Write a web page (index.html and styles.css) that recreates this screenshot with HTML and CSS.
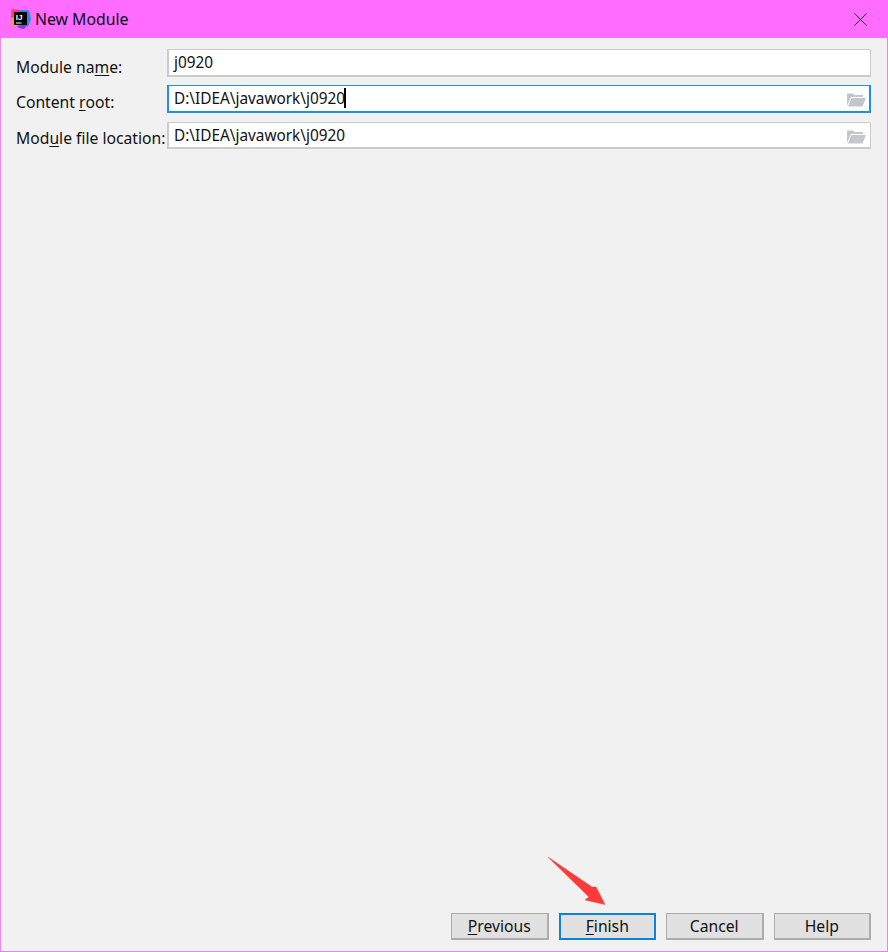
FILE: index.html
```html
<!DOCTYPE html>
<html lang="en">
<head>
<meta charset="utf-8">
<title>New Module</title>
<link rel="stylesheet" href="styles.css">
</head>
<body>
<div class="window">
  <header class="titlebar">
    <svg class="app-icon" width="20" height="21" viewBox="0 0 20 21">
      <path d="M0.500 0 L10 1 L10 10 L0 11 Z" fill="#fc3a7b"/>
      <path d="M0 9 L4 8 L5 18 L1.500 17 Z" fill="#fd9a2c"/>
      <path d="M9 1 L18 1.500 L20 10 L17.500 17 L8 19 Z" fill="#1f8df0"/>
      <path d="M6 17 L17 15 L13 20 L8 19 Z" fill="#7a3de8"/>
      <rect x="3" y="3" width="13" height="13" fill="#000"/>
      <text x="4.800" y="10.800" class="icon-text">IJ</text>
      <rect x="5" y="13.500" width="5.500" height="1" fill="#fff"/>
    </svg>
    <span class="title">New Module</span>
    <svg class="close" width="13" height="13" viewBox="0 0 13 13">
      <path d="M0.500 0.500 L12.500 12.500 M12.500 0.500 L0.500 12.500" stroke="#111" stroke-width="1" fill="none"/>
    </svg>
  </header>
  <main class="content">
    <div class="form">
      <label class="label label-first">Module na<u>m</u>e:</label>
      <div class="field"><span class="value">j0920</span></div>
      <label class="label">Content <u>r</u>oot:</label>
      <div class="field field-focus">
        <span class="value">D:\IDEA\javawork\j0920</span><span class="caret"></span>
        <svg class="folder" width="20" height="15" viewBox="0 0 20 15"><path d="M1 14 L1 1.500 L7 1.500 L8.500 3 L17 3 L17 5 L5 5 Z" fill="#c2c8ca"/><path d="M2 14.500 L5.500 6 L20 6 L16.500 14.500 Z" fill="#c2c8ca"/></svg>
      </div>
      <label class="label">Mod<u>u</u>le file location:</label>
      <div class="field field-last">
        <span class="value">D:\IDEA\javawork\j0920</span>
        <svg class="folder" width="20" height="15" viewBox="0 0 20 15"><path d="M1 14 L1 1.500 L7 1.500 L8.500 3 L17 3 L17 5 L5 5 Z" fill="#c2c8ca"/><path d="M2 14.500 L5.500 6 L20 6 L16.500 14.500 Z" fill="#c2c8ca"/></svg>
      </div>
    </div>
    <footer class="buttons">
      <button class="btn"><u>P</u>revious</button>
      <button class="btn btn-default"><u>F</u>inish</button>
      <button class="btn">Cancel</button>
      <button class="btn">Help</button>
    </footer>
  </main>
  <svg class="arrow" width="70" height="60" viewBox="0 0 70 60">
    <path d="M1 0 L45 30 L49 30 L58 47.500 L38 43 L42 40 Z" fill="#fd3a3a" stroke="#fd3a3a" stroke-width="0.500"/>
  </svg>
</div>
</body>
</html>
```

FILE: styles.css
```css
* { box-sizing: border-box; }
html, body { margin: 0; padding: 0; height: 100%; }
body { font-family: "Noto Sans", "Open Sans", sans-serif; font-size: 15.7px; color: #111; background: #f1f1f1; }
.window {
  position: relative;
  width: 888px;
  height: 952px;
  display: flex;
  flex-direction: column;
  border: 1px solid #ee82ee;
  border-top: 0;
  background: #f1f1f1;
}
.titlebar {
  flex: 0 0 38px;
  margin: 0 -1px;
  background: #ff6cff;
  display: flex;
  align-items: center;
  padding: 0 21px 0 11px;
}
.app-icon { flex: none; margin-right: 4px; }
.icon-text { font-family: "Liberation Sans", sans-serif; font-size: 8px; font-weight: 700; fill: #fff; }
.title { flex: 1; font-size: 15.8px; color: #0a0a1a; }
.close { flex: none; }
.content { flex: 1; display: flex; flex-direction: column; justify-content: space-between; padding: 11px 16px 11px 15px; }
.form {
  display: grid;
  grid-template-columns: 151px 1fr;
  grid-template-rows: 28px 28px 28px;
  row-gap: 8px;
  align-items: stretch;
}
.label { display: flex; align-items: center; white-space: pre; padding-top: 6px; line-height: 20px; }
.label-first { padding-top: 7px; }
.label u { text-underline-offset: 2px; }
.field {
  display: flex;
  align-items: center;
  background: #fff;
  border: 2px solid #cbcbcb;
  border-width: 1px 1px 2px 2px;
  padding: 0 4px 1px 5px;
  font-size: 15.35px;
}
.field-focus { border: 2px solid #1e90e8; border-width: 1px 2px 2px 2px; padding-right: 3px; }
.field-last { margin-top: 1px; }
.value { white-space: pre; color: #111; }
.caret { width: 2px; height: 20px; background: #000; margin-left: -1px; }
.folder { margin-left: auto; flex: none; margin-top: 3px; }
.buttons { display: flex; justify-content: flex-end; gap: 10px; }
.btn {
  width: 97.5px;
  height: 27px;
  padding: 0;
  font: inherit;
  color: #111;
  background: #e1e1e1;
  border: 1px solid #adadad;
  border-width: 1px 2px 2px 1px;
  line-height: 22px;
}
.btn u { text-underline-offset: 2px; }
.btn-default { border: 2px solid #0f80dc; padding: 0 0 1px; }
.arrow { position: absolute; left: 546px; top: 857px; }
```
